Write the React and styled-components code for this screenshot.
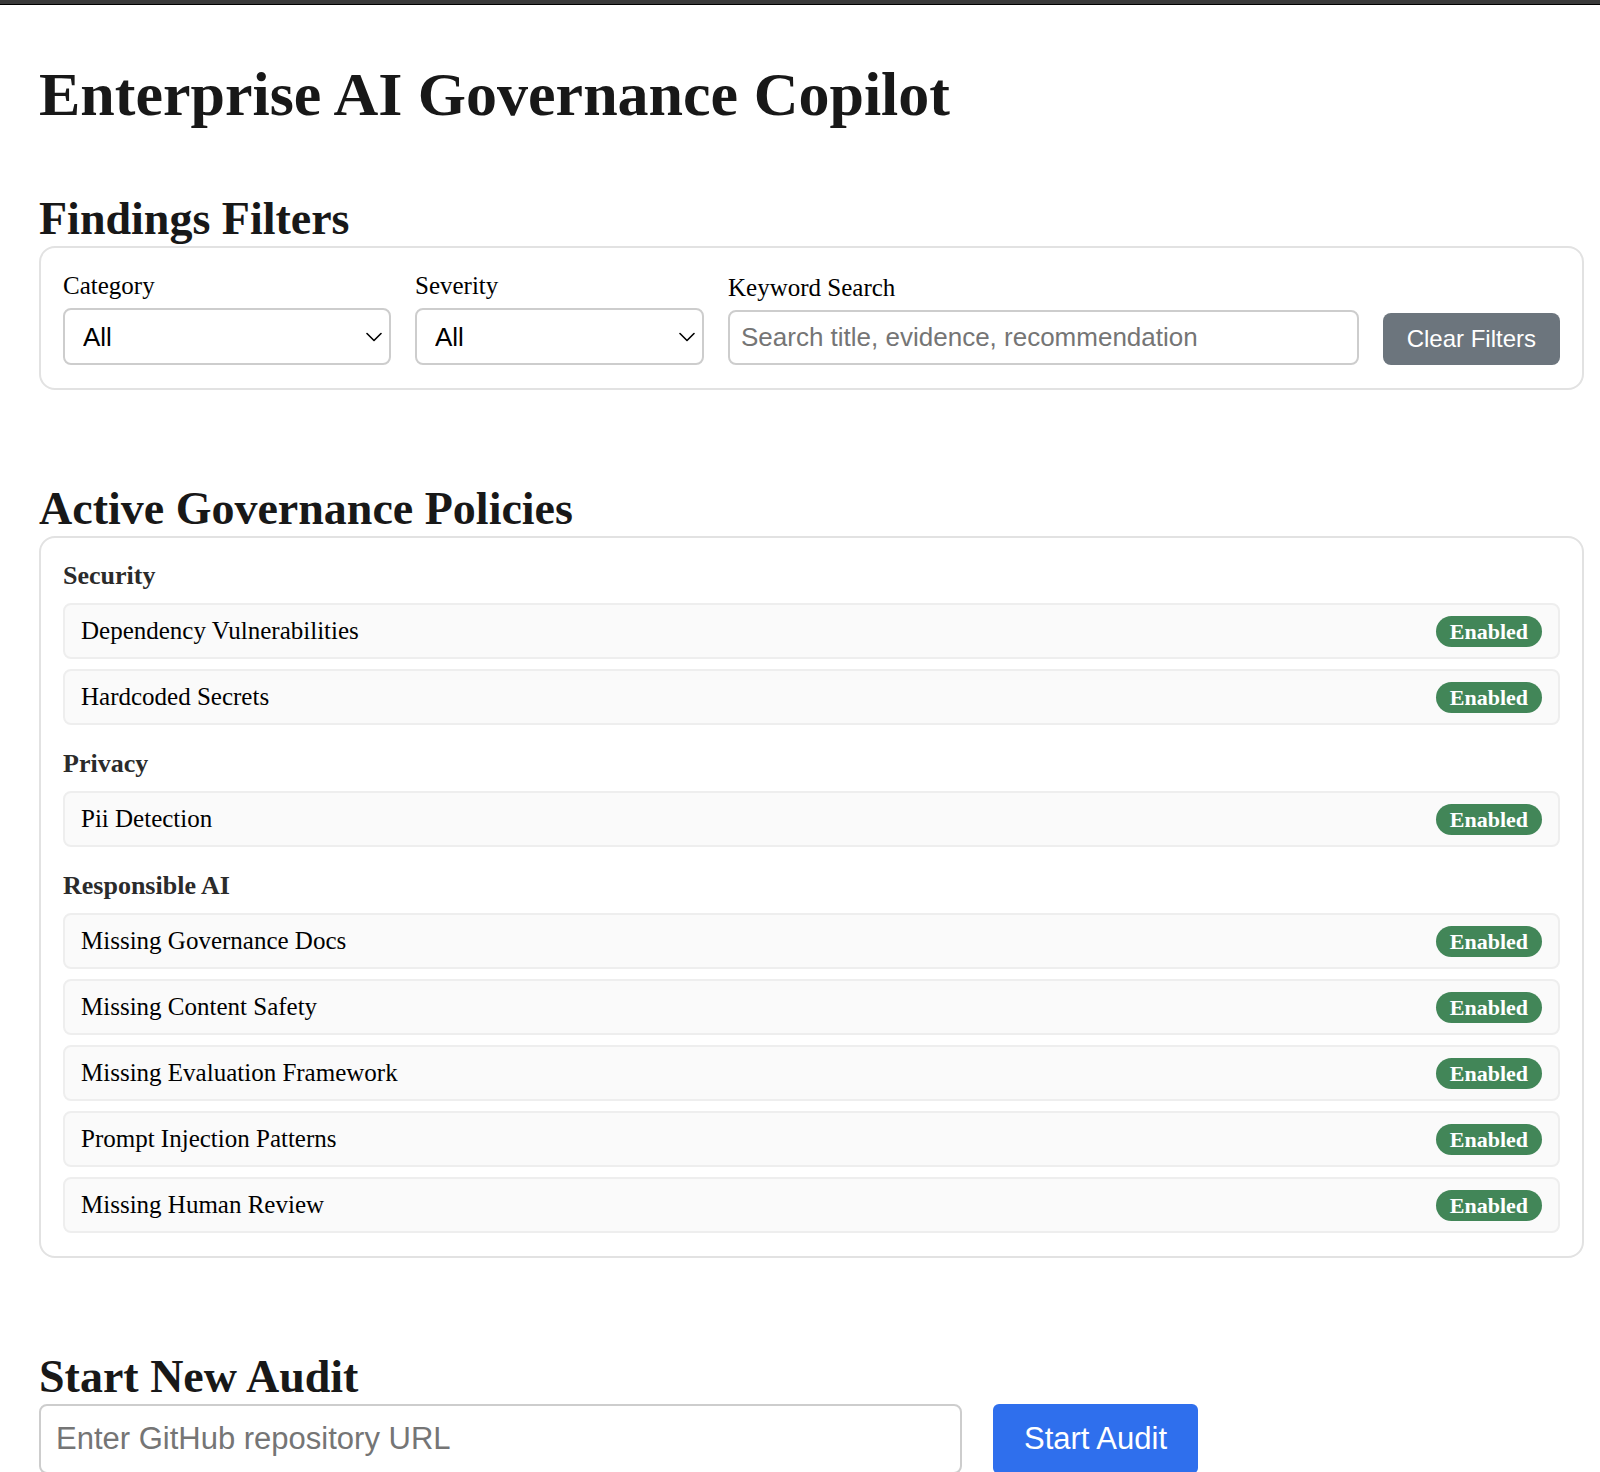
import React, { useState } from 'react'
import styled, { createGlobalStyle } from 'styled-components'

const policyGroups = [
  {
    name: 'Security',
    policies: ['Dependency Vulnerabilities', 'Hardcoded Secrets'],
  },
  {
    name: 'Privacy',
    policies: ['Pii Detection'],
  },
  {
    name: 'Responsible AI',
    policies: [
      'Missing Governance Docs',
      'Missing Content Safety',
      'Missing Evaluation Framework',
      'Prompt Injection Patterns',
      'Missing Human Review',
    ],
  },
]

const SelectField = ({ id, label, options, value, onChange }) => (
  <Field>
    <Label htmlFor={id}>{label}</Label>
    <SelectWrap>
      <Select id={id} value={value} onChange={(e) => onChange(e.target.value)}>
        {options.map((option) => (
          <option key={option}>{option}</option>
        ))}
      </Select>
      <Chevron viewBox="0 0 16 10" aria-hidden="true">
        <path d="M1 1.5 L8 8.5 L15 1.5" />
      </Chevron>
    </SelectWrap>
  </Field>
)

const App = () => {
  const [category, setCategory] = useState('All')
  const [severity, setSeverity] = useState('All')
  const [keyword, setKeyword] = useState('')
  const [repoUrl, setRepoUrl] = useState('')

  const clearFilters = () => {
    setCategory('All')
    setSeverity('All')
    setKeyword('')
  }

  return (
    <>
      <GlobalStyle />
      <TopBar />
      <Page>
        <Title>Enterprise AI Governance Copilot</Title>

        {/* Filters */}
        <Section>
          <Heading>Findings Filters</Heading>
          <Filters>
            <SelectField
              id="category"
              label="Category"
              options={['All', 'Security', 'Privacy', 'Responsible AI']}
              value={category}
              onChange={setCategory}
            />
            <SelectField
              id="severity"
              label="Severity"
              options={['All', 'High', 'Medium', 'Low']}
              value={severity}
              onChange={setSeverity}
            />
            <Field>
              <Label htmlFor="keyword">Keyword Search</Label>
              <TextInput
                id="keyword"
                type="text"
                placeholder="Search title, evidence, recommendation"
                value={keyword}
                onChange={(e) => setKeyword(e.target.value)}
              />
            </Field>
            <Button type="button" onClick={clearFilters}>
              Clear Filters
            </Button>
          </Filters>
        </Section>

        {/* Policies */}
        <Section>
          <Heading>Active Governance Policies</Heading>
          <Policies>
            {policyGroups.map((group) => (
              <PolicyGroup key={group.name}>
                <GroupName>{group.name}</GroupName>
                <PolicyList>
                  {group.policies.map((policy) => (
                    <PolicyRow key={policy}>
                      <span>{policy}</span>
                      <Badge>Enabled</Badge>
                    </PolicyRow>
                  ))}
                </PolicyList>
              </PolicyGroup>
            ))}
          </Policies>
        </Section>

        {/* New audit */}
        <Section>
          <Heading>Start New Audit</Heading>
          <AuditForm onSubmit={(e) => e.preventDefault()}>
            <TextInput
              $large
              type="url"
              aria-label="GitHub repository URL"
              placeholder="Enter GitHub repository URL"
              value={repoUrl}
              onChange={(e) => setRepoUrl(e.target.value)}
            />
            <Button $primary type="submit">
              Start Audit
            </Button>
          </AuditForm>
        </Section>
      </Page>
    </>
  )
}

export default App
//----------------------------------------------------------------

const GlobalStyle = createGlobalStyle`
  * {
    box-sizing: border-box;
  }
  body {
    margin: 0;
    background: #fff;
    color: #000;
    font-family: 'Liberation Serif', 'Times New Roman', serif;
    font-size: 25px;
    line-height: 28px;
  }
`

const TopBar = styled.div`
  height: 5px;
  background: #3a3a3a;
  border-bottom: 1px solid #000;
`

const Page = styled.main`
  padding: 53px 16px 0 39px;
`

const Title = styled.h1`
  margin: 0 0 62px;
  font-size: 62px;
  line-height: 72px;
  color: #181818;
`

const Section = styled.section`
  margin-bottom: 92px;
  &:last-child {
    margin-bottom: 0;
  }
`

const Heading = styled.h2`
  margin: 0;
  font-size: 46px;
  line-height: 54px;
  color: #181818;
`

const Card = styled.div`
  border: 2px solid #e2e2e2;
  border-radius: 16px;
  padding: 23px 22px;
`

const Filters = styled(Card)`
  display: grid;
  grid-template-columns: 328px 289px 1fr auto;
  align-items: end;
  gap: 24px;
  padding-top: 24px;
`

const Field = styled.div`
  display: flex;
  flex-direction: column;
  gap: 8px;
`

const Label = styled.label`
  align-self: flex-start;
`

const SelectWrap = styled.div`
  position: relative;
`

const Select = styled.select`
  appearance: none;
  display: block;
  width: 100%;
  height: 57px;
  padding: 0 40px 0 18px;
  border: 2px solid #cdcdcd;
  border-radius: 8px;
  background: #fff;
  color: #000;
  font: 26px 'Liberation Sans', Arial, sans-serif;
`

const Chevron = styled.svg`
  position: absolute;
  top: 24px;
  right: 9px;
  width: 16px;
  height: 10px;
  fill: none;
  stroke: #000;
  stroke-width: 1.6;
  stroke-linecap: round;
  stroke-linejoin: round;
  pointer-events: none;
`

const TextInput = styled.input`
  width: 100%;
  height: ${(props) => (props.$large ? '70px' : '55px')};
  padding: 0 ${(props) => (props.$large ? '15px' : '11px')};
  border: 2px solid #cdcdcd;
  border-radius: 8px;
  background: #fff;
  color: #000;
  font-family: 'Liberation Sans', Arial, sans-serif;
  font-size: ${(props) => (props.$large ? '31px' : '26px')};
  &::placeholder {
    color: #757575;
  }
`

const Button = styled.button`
  height: ${(props) => (props.$primary ? '70px' : '52px')};
  padding: 0 ${(props) => (props.$primary ? '31px' : '24px')};
  border: 0;
  border-radius: ${(props) => (props.$primary ? '6px' : '8px')};
  background: ${(props) => (props.$primary ? '#2f6fed' : '#6c757d')};
  color: #fff;
  font-family: 'Liberation Sans', Arial, sans-serif;
  font-size: ${(props) => (props.$primary ? '31px' : '24px')};
  white-space: nowrap;
  cursor: pointer;
`

const Policies = styled(Card)`
  display: flex;
  flex-direction: column;
  gap: 24px;
`

const PolicyGroup = styled.div`
  display: flex;
  flex-direction: column;
  gap: 12px;
`

const GroupName = styled.h3`
  margin: 0;
  font-size: 26px;
  line-height: 30px;
  color: #2b2b2b;
`

const PolicyList = styled.ul`
  display: flex;
  flex-direction: column;
  gap: 10px;
  margin: 0;
  padding: 0;
  list-style: none;
`

const PolicyRow = styled.li`
  display: flex;
  align-items: center;
  justify-content: space-between;
  height: 56px;
  padding: 0 16px;
  border: 2px solid #eeeeee;
  border-radius: 8px;
  background: #fafafa;
`

const Badge = styled.span`
  padding: 2px 14px;
  border-radius: 16px;
  background: #428658;
  color: #fff;
  font-size: 22px;
  font-weight: bold;
  line-height: 27px;
`

const AuditForm = styled.form`
  display: grid;
  grid-template-columns: minmax(0, 923px) auto;
  justify-content: start;
  gap: 31px;
`
